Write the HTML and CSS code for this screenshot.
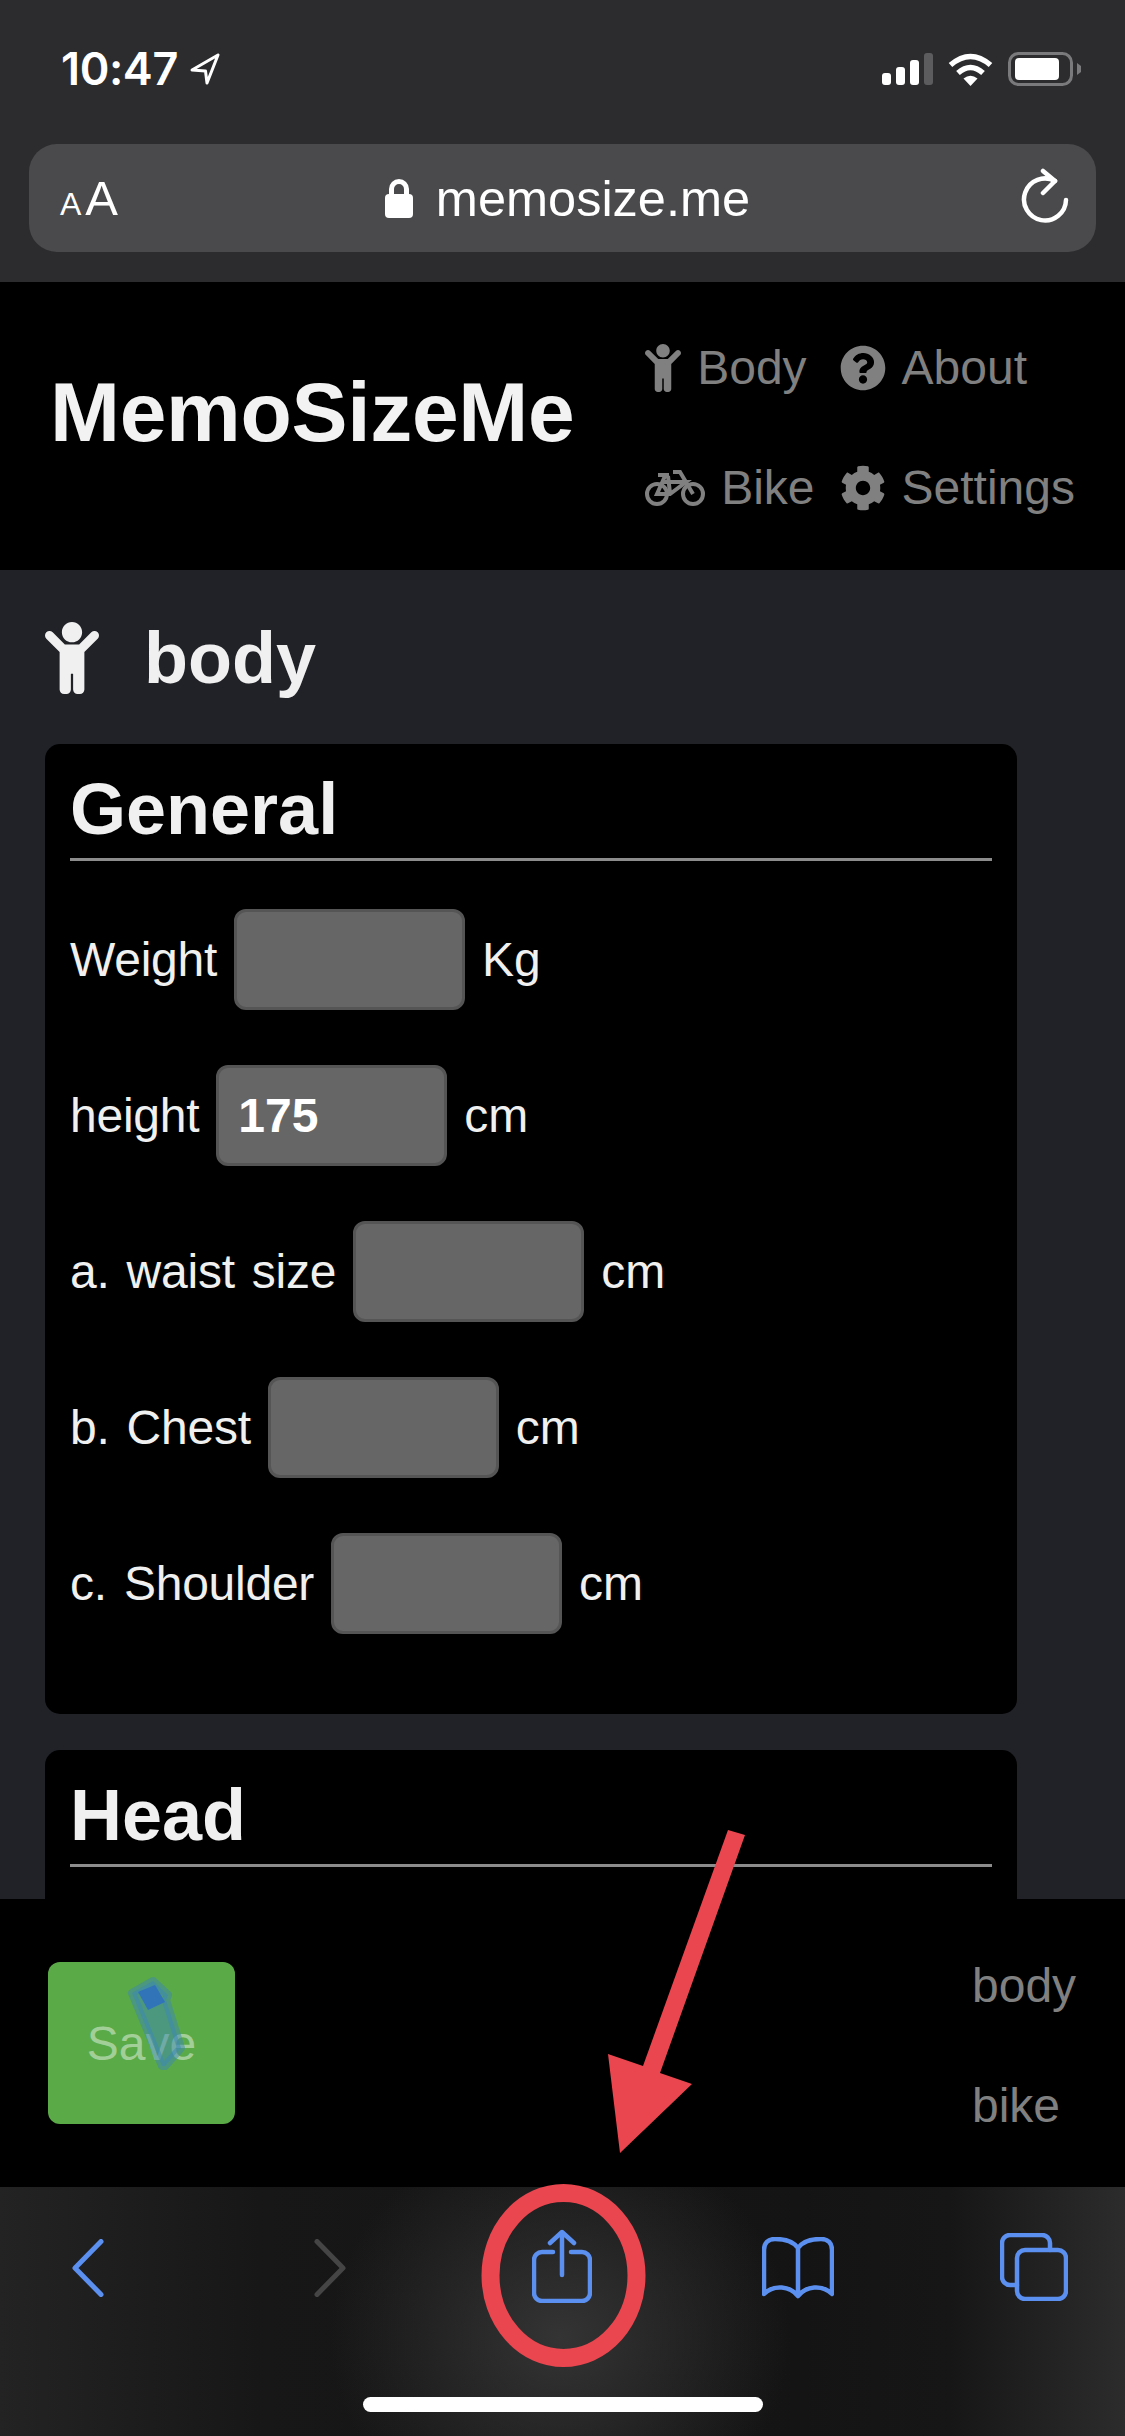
FILE: index.html
```html
<!DOCTYPE html>
<html lang="en">
<head>
<meta charset="utf-8">
<title>MemoSizeMe</title>
<link rel="stylesheet" href="styles.css">
</head>
<body>
<svg class="sprite" width="0" height="0" aria-hidden="true">
  <symbol id="i-child" viewBox="0 0 384 512"><path d="M120 72c0-39.765 32.235-72 72-72s72 32.235 72 72c0 39.764-32.235 72-72 72s-72-32.236-72-72zm254.627 1.373c-12.496-12.497-32.758-12.497-45.254 0L242.745 160H141.254L54.627 73.373c-12.496-12.497-32.758-12.497-45.254 0-12.497 12.497-12.497 32.758 0 45.255L104 213.254V480c0 17.673 14.327 32 32 32h16c17.673 0 32-14.327 32-32V368h16v112c0 17.673 14.327 32 32 32h16c17.673 0 32-14.327 32-32V213.254l94.627-94.627c12.497-12.497 12.497-32.757 0-45.254z"/></symbol>
  <symbol id="i-question" viewBox="0 0 512 512"><path d="M504 256c0 136.997-111.043 248-248 248S8 392.997 8 256C8 119.083 119.043 8 256 8s248 111.083 248 248zM262.655 90c-54.497 0-89.255 22.957-116.549 63.758-3.536 5.286-2.353 12.415 2.715 16.258l34.699 26.31c5.205 3.947 12.621 3.008 16.665-2.122 17.864-22.658 30.113-35.797 57.303-35.797 20.429 0 45.698 13.148 45.698 32.958 0 14.976-12.363 22.667-32.534 33.976C247.128 238.528 216 254.941 216 296v4c0 6.627 5.373 12 12 12h56c6.627 0 12-5.373 12-12v-1.333c0-28.462 83.186-29.647 83.186-106.667 0-58.002-60.165-102-116.531-102zM256 338c-25.365 0-46 20.635-46 46 0 25.364 20.635 46 46 46s46-20.636 46-46c0-25.365-20.635-46-46-46z"/></symbol>
  <symbol id="i-cog" viewBox="0 0 512 512"><path d="M487.4 315.7l-42.6-24.6c4.3-23.2 4.3-47 0-70.2l42.6-24.6c4.9-2.8 7.1-8.6 5.5-14-11.1-35.6-30-67.8-54.7-94.6-3.8-4.1-10-5.1-14.8-2.3L380.8 110c-17.9-15.4-38.5-27.3-60.8-35.1V25.8c0-5.6-3.9-10.5-9.4-11.7-36.7-8.2-74.3-7.8-109.2 0-5.5 1.2-9.4 6.1-9.4 11.7V75c-22.2 7.9-42.8 19.8-60.8 35.1L88.7 85.5c-4.9-2.8-11-1.9-14.8 2.3-24.7 26.7-43.6 58.9-54.7 94.6-1.7 5.4.6 11.2 5.5 14L67.3 221c-4.3 23.2-4.3 47 0 70.2l-42.6 24.6c-4.9 2.8-7.1 8.6-5.5 14 11.1 35.6 30 67.8 54.7 94.6 3.8 4.1 10 5.1 14.8 2.3l42.6-24.6c17.9 15.4 38.5 27.3 60.8 35.1v49.2c0 5.6 3.9 10.5 9.4 11.7 36.7 8.2 74.3 7.8 109.2 0 5.5-1.2 9.4-6.1 9.4-11.7v-49.2c22.2-7.9 42.8-19.8 60.8-35.1l42.6 24.6c4.9 2.8 11 1.9 14.8-2.3 24.7-26.7 43.6-58.9 54.7-94.6 1.5-5.5-.7-11.3-5.6-14.1zM256 336c-44.1 0-80-35.9-80-80s35.9-80 80-80 80 35.9 80 80-35.9 80-80 80z"/></symbol>
</svg>

<div class="screen">
  <div class="chrome">
    <div class="status">
      <div class="status-left">
        <span class="time">10:47</span>
        <svg class="loc" viewBox="0 0 32 32"><path d="M29 2 L3 17 L16.500 18 L18 30 Z"/></svg>
      </div>
      <div class="status-right">
        <svg class="signal" viewBox="0 0 51 32"><rect class="on" x="0" y="20" width="9" height="12" rx="3"/><rect class="on" x="14" y="14" width="9" height="18" rx="3"/><rect class="on" x="28" y="7" width="9" height="25" rx="3"/><rect class="off" x="42" y="0" width="9" height="32" rx="3"/></svg>
        <svg class="wifi" viewBox="0 0 45 33"><path class="arc" d="M2.500 12 Q22.500 -5 42.500 12"/><path class="arc" d="M10 20 Q22.500 9 35 20"/><path class="dot" d="M15.500 25.500 Q22.500 20 29.500 25.500 L22.500 33 Z"/></svg>
        <svg class="battery" viewBox="0 0 73 34"><rect class="shell" x="1.500" y="1.500" width="62" height="31" rx="9"/><rect class="level" x="7" y="6" width="44" height="22" rx="4"/><path class="nub" d="M69 11 L73 14 V20 L69 23 Z"/></svg>
      </div>
    </div>
    <div class="url-bar">
      <div class="aa"><span class="a-small">A</span><span class="a-big">A</span></div>
      <div class="address">
        <svg class="lock" viewBox="0 0 28 39"><path class="shackle" d="M6.500 18 V10 a7.500 7.500 0 0 1 15 0 V18"/><rect class="body-lock" x="0" y="15" width="28" height="24" rx="4"/></svg>
        <span class="domain">memosize.me</span>
      </div>
      <svg class="reload" viewBox="0 0 50 60"><path d="M46 32 A21 21 0 1 1 35 13"/><path d="M23 3 L35 13 L23 25"/></svg>
    </div>
  </div>

  <header class="site-header">
    <div class="brand">MemoSizeMe</div>
    <nav class="site-nav">
      <a class="nav-item"><svg class="fa"><use href="#i-child"/></svg><span>Body</span></a>
      <a class="nav-item"><svg class="fa fa-round"><use href="#i-question"/></svg><span>About</span></a>
      <a class="nav-item"><svg class="bike" viewBox="0 0 60 36"><circle cx="12" cy="24" r="10"/><circle cx="48" cy="24" r="10"/><path d="M13 5 H24 M28 2 H35 L48 24 M20 6 L12 24 H25 L41 12 H18 M23 6 L25 23"/></svg><span>Bike</span></a>
      <a class="nav-item"><svg class="fa fa-round"><use href="#i-cog"/></svg><span>Settings</span></a>
    </nav>
  </header>

  <main class="content">
    <h1 class="page-title"><svg class="fa-title"><use href="#i-child"/></svg><span class="page-title-text">body</span></h1>

    <section class="card">
      <h2 class="card-title">General</h2>
      <div class="field"><label>Weight</label><input class="box" type="text"><span>Kg</span></div>
      <div class="field"><label>height</label><input class="box" type="text" value="175"><span>cm</span></div>
      <div class="field"><label>a. waist size</label><input class="box" type="text"><span>cm</span></div>
      <div class="field"><label>b. Chest</label><input class="box" type="text"><span>cm</span></div>
      <div class="field"><label>c. Shoulder</label><input class="box" type="text"><span>cm</span></div>
    </section>

    <section class="card">
      <h2 class="card-title">Head</h2>
    </section>
  </main>

  <div class="action-bar">
    <button class="save" type="button">Save</button>
    <div class="jump-links">
      <a>body</a>
      <a>bike</a>
    </div>
  </div>

  <div class="toolbar">
    <svg class="tool tool-back" viewBox="0 0 32 58"><path d="M29 2.500 L3 29 L29 55.500"/></svg>
    <svg class="tool tool-forward" viewBox="0 0 32 58"><path d="M3 2.500 L29 29 L3 55.500"/></svg>
    <svg class="tool tool-share" viewBox="0 0 60 74"><path d="M21 23 H10 a8 8 0 0 0 -8 8 V64 a8 8 0 0 0 8 8 H50 a8 8 0 0 0 8 -8 V31 a8 8 0 0 0 -8 -8 H39"/><path d="M30 46 V4 M18 14 L30 3 L42 14"/></svg>
    <svg class="tool tool-book" viewBox="0 0 72 62"><path d="M36 11 C31 4 22 2 13 2 C6 2 2 6 2 13 V57 C12 47 28 49 36 59 C44 49 60 47 70 57 V13 C70 6 66 2 59 2 C50 2 41 4 36 11 V59"/></svg>
    <svg class="tool tool-tabs" viewBox="0 0 68 68"><path d="M17 52 H10 a8 8 0 0 1 -8 -8 V10 a8 8 0 0 1 8 -8 H42 a8 8 0 0 1 8 8 V17"/><rect x="17" y="17" width="49" height="49" rx="8"/></svg>
    <div class="home-indicator"></div>
  </div>

  <svg class="annotations" viewBox="0 0 1125 2436" aria-hidden="true">
    <polygon class="smudge-light" points="132,1993 153,1981 168,1995 166,2000 181,2048 165,2066 162,2066"/>
    <polygon class="smudge-dark" points="138,1992 155,1985 165,2002 148,2010"/>
    <polygon class="mark" points="728,1830 745,1835 660,2073 692,2084 620,2153 608,2054 643,2066"/>
    <ellipse class="ring" cx="563.500" cy="2275.500" rx="73" ry="82.500"/>
  </svg>
</div>
</body>
</html>
```

FILE: styles.css
```css
* { box-sizing: border-box; }

html, body {
  margin: 0;
  padding: 0;
  background: #000;
}

body {
  font-family: "Liberation Sans", Arial, sans-serif;
  color: #f0f0f0;
}

.sprite { position: absolute; }

.screen {
  position: relative;
  display: flex;
  flex-direction: column;
  width: 1125px;
  height: 2436px;
  overflow: hidden;
}

/* Browser chrome */
.chrome {
  flex: 0 0 282px;
  padding: 0 29px;
  background: #2c2c2e;
}

.status {
  display: flex;
  align-items: center;
  justify-content: space-between;
  height: 144px;
  padding: 0 15px 6px 32px;
}

.status-left { display: flex; align-items: center; gap: 11px; }

.time {
  font-family: Inter, "Liberation Sans", sans-serif;
  font-size: 45px;
  font-weight: 600;
  letter-spacing: -0.4px;
  line-height: 50px;
  color: #fff;
}

.loc { width: 32px; height: 32px; }
.loc path { fill: none; stroke: #fff; stroke-width: 3; stroke-linejoin: round; }

.status-right { display: flex; align-items: center; gap: 15px; }
.signal { width: 51px; height: 32px; }
.signal .on { fill: #fff; }
.signal .off { fill: #5c5c5e; }
.wifi { width: 45px; height: 33px; }
.wifi .arc { fill: none; stroke: #fff; stroke-width: 5.500; }
.wifi .dot { fill: #fff; }
.battery { width: 73px; height: 34px; }
.battery .shell { fill: none; stroke: #7a7a7c; stroke-width: 3; }
.battery .level { fill: #fff; }
.battery .nub { fill: #7a7a7c; }

.url-bar {
  display: grid;
  grid-template-columns: 1fr auto 1fr;
  align-items: center;
  height: 108px;
  padding: 0 26px 0 31px;
  border-radius: 28px;
  background: #4a4a4c;
  color: #fff;
}

.aa { display: flex; align-items: baseline; gap: 4px; padding-top: 5px; line-height: 60px; }
.a-small { font-size: 32px; }
.a-big { font-size: 49px; }

.address { display: flex; align-items: center; gap: 23px; margin-left: 5px; }
.lock { width: 28px; height: 39px; }
.lock .shackle { fill: none; stroke: #fff; stroke-width: 5; }
.lock .body-lock { fill: #fff; }
.domain { padding-top: 2px; font-size: 50.500px; line-height: 60px; }

.reload { justify-self: end; width: 50px; height: 60px; }
.reload path { fill: none; stroke: #fff; stroke-width: 4.500; stroke-linecap: round; stroke-linejoin: round; }

/* Site header */
.site-header {
  display: flex;
  flex: 0 0 288px;
  align-items: center;
  justify-content: space-between;
  padding: 0 50px;
  background: #000;
}

.brand {
  padding-bottom: 28px;
  font-size: 84px;
  font-weight: 700;
  letter-spacing: -0.3px;
  line-height: 96px;
  color: #f2f2f2;
}

.site-nav {
  display: grid;
  grid-template-columns: auto auto;
  row-gap: 65px;
  column-gap: 25px;
  padding-top: 3px;
}

.nav-item {
  display: flex;
  align-items: center;
  gap: 16px;
  height: 55px;
  font-size: 48px;
  color: #808080;
}

.fa { width: 36px; height: 48px; fill: #808080; }
.fa-round { width: 46px; height: 48px; }
.bike { width: 60px; height: 36px; }
.bike circle, .bike path { fill: none; stroke: #808080; stroke-width: 4; }

/* Page content */
.content {
  flex: 0 0 1329px;
  padding: 0 108px 0 45px;
  overflow: hidden;
  background: #212227;
}

.page-title {
  display: flex;
  align-items: center;
  gap: 46px;
  height: 72px;
  margin: 52px 0 50px;
  font-size: 72px;
  font-weight: 700;
  line-height: 72px;
  color: #f0f0f0;
}

.page-title-text { margin-left: -1px; }
.fa-title { width: 54px; height: 72px; fill: #f0f0f0; }

.card {
  height: 970px;
  margin-bottom: 36px;
  padding: 0 25px;
  border-radius: 15px;
  background: #000;
}

.card-title {
  height: 117px;
  margin: 0 0 48px;
  padding-top: 23px;
  border-bottom: 3px solid #8c8c8c;
  font-size: 72px;
  font-weight: 700;
  line-height: 84px;
  color: #f0f0f0;
}

.field {
  display: flex;
  align-items: center;
  gap: 17px;
  height: 101px;
  margin-bottom: 55px;
  font-size: 48px;
  color: #f0f0f0;
}

.field label {
  letter-spacing: -0.25px;
  word-spacing: 4px;
}

.box {
  width: 231px;
  height: 101px;
  padding: 0 19px;
  border: 3px solid #555;
  border-radius: 12px;
  outline: none;
  background: #666;
  font-family: "Liberation Sans", Arial, sans-serif;
  font-size: 48px;
  font-weight: 700;
  color: #fff;
}

/* Fixed action bar */
.action-bar {
  display: flex;
  flex: 0 0 288px;
  align-items: center;
  justify-content: space-between;
  padding: 0 50px 0 48px;
  background: #000;
}

.save {
  width: 187px;
  height: 162px;
  padding: 0;
  border: 0;
  border-radius: 12px;
  background: #5aaa47;
  font-family: "Liberation Sans", Arial, sans-serif;
  font-size: 48px;
  color: rgba(255, 255, 255, 0.45);
}

.jump-links {
  display: flex;
  flex-direction: column;
  gap: 65px;
  width: 103px;
  padding-top: 4px;
  font-size: 48px;
  line-height: 55px;
  color: #808080;
}

/* Safari toolbar */
.toolbar {
  position: relative;
  display: flex;
  flex: 0 0 249px;
  align-items: flex-start;
  padding-left: 72px;
  background:
    radial-gradient(ellipse 230px 210px at 560px 150px, #343434 0, rgba(52, 52, 52, 0) 100%),
    linear-gradient(90deg, #232323 0, #171717 260px, #141414 800px, #161616 950px, #2c2c2c 1125px);
}

.tool { flex: none; fill: none; stroke: #5b8ff0; stroke-width: 4.500; stroke-linecap: round; stroke-linejoin: round; }
.tool-back { width: 32px; height: 58px; margin-top: 52px; stroke-width: 5; }
.tool-forward { width: 32px; height: 58px; margin: 52px 0 0 210px; stroke: #454545; stroke-width: 5; }
.tool-share { width: 60px; height: 74px; margin: 42px 0 0 186px; }
.tool-book { width: 72px; height: 62px; margin: 50px 0 0 170px; }
.tool-tabs { width: 68px; height: 68px; margin: 46px 0 0 166px; }

.home-indicator {
  position: absolute;
  left: 363px;
  top: 210px;
  width: 400px;
  height: 15px;
  border-radius: 8px;
  background: #fff;
}

/* Drawn-on annotations */
.annotations {
  position: absolute;
  inset: 0;
  width: 1125px;
  height: 2436px;
  pointer-events: none;
}

.smudge-light { fill: #3b86b8; fill-opacity: 0.5; stroke: #3b86b8; stroke-opacity: 0.5; stroke-width: 8; stroke-linejoin: round; }
.smudge-dark { fill: #2e6dc2; fill-opacity: 0.85; }
.mark { fill: #ea464f; }
.ring { fill: none; stroke: #ea464f; stroke-width: 18; }
```
